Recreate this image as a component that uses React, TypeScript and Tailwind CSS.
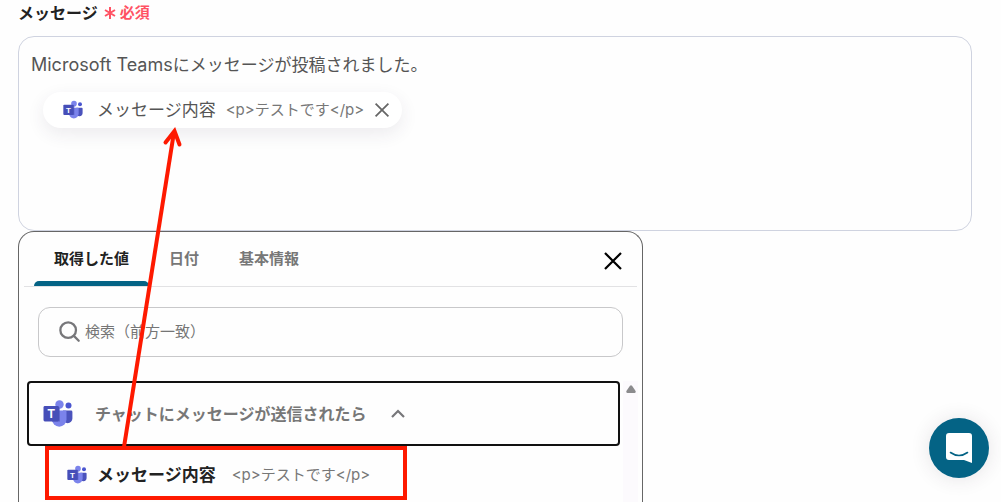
import React, { useState } from 'react';

const TABS = ['取得した値', '日付', '基本情報'];

const TeamsIcon: React.FC<{ className?: string }> = ({ className }) => (
  <svg viewBox="0 0 30 28" className={className} aria-hidden="true">
    <circle cx="25.5" cy="5.5" r="3" fill="#4a55cf" />
    <path d="M20 10.5h8a1.4 1.4 0 0 1 1.4 1.4v6.6a4.6 4.6 0 0 1-9.4 0z" fill="#4b53bc" />
    <circle cx="16.5" cy="4.5" r="4.2" fill="#7b83eb" />
    <path d="M9 10.5h13.2a1.3 1.3 0 0 1 1.3 1.3v7.6a7 7 0 0 1-14.500 0z" fill="#7b83eb" />
    <path d="M9 7h6.5A1.5 1.5 0 0 1 17 8.500v13H9z" fill="#4a50b5" opacity="0.6" />
    <rect x="0.500" y="6" width="15.500" height="15.500" rx="1.400" fill="#464eb8" />
    <text x="8.200" y="18" textAnchor="middle" fontSize="12" fontWeight="700" fill="#fff" fontFamily="Liberation Sans, sans-serif">T</text>
  </svg>
);

const CloseIcon: React.FC<{ className?: string }> = ({ className }) => (
  <svg viewBox="0 0 20 20" fill="none" stroke="currentColor" strokeWidth="2.200" className={className} aria-hidden="true">
    <path d="M2 2l16 16M18 2L2 18" />
  </svg>
);

export default function App() {
  const [tab, setTab] = useState(0);
  const [query, setQuery] = useState('');
  const [open, setOpen] = useState(true);
  const [hasValue, setHasValue] = useState(true);

  return (
    <div className="relative flex h-screen flex-col overflow-hidden bg-[#fefefe] pl-[18px] pr-[29px] font-['Inter','Noto_Sans_CJK_JP',sans-serif] text-[#555]">
      {/* Field label */}
      <div className="flex h-9 shrink-0 items-start gap-[6px]">
        <span id="message-label" className="text-base leading-[26px] font-bold text-[#222]">メッセージ</span>
        <span className="flex items-center gap-1 text-[15px] leading-[26px] font-bold text-[#ff5263]">
          <svg viewBox="0 0 12 12" className="size-3" stroke="currentColor" strokeWidth="2" aria-hidden="true">
            <path d="M6 0v12M1 3l10 6M11 3L1 9" />
          </svg>
          必須
        </span>
      </div>

      {/* Message editor */}
      <div
        role="textbox"
        aria-multiline="true"
        aria-labelledby="message-label"
        className="h-[195px] shrink-0 rounded-2xl border border-[#cfd3e0] px-3 py-4"
      >
        <p className="text-[17px] leading-6"><span className="text-lg leading-6">Microsoft Teams</span>にメッセージが投稿されました。</p>
        {hasValue && (
          <div className="mt-[15px] ml-3 inline-flex h-9 items-center rounded-full bg-white pr-3 pl-5 shadow-[0_6px_18px_rgba(60,40,80,0.09)]">
            <TeamsIcon className="mr-[14px] h-5 w-5" />
            <span className="text-[17px] leading-6">メッセージ内容</span>
            <span className="ml-[10px] text-[15px] leading-6 text-[#777]">&lt;p&gt;テストです&lt;/p&gt;</span>
            <button type="button" aria-label="削除" onClick={() => setHasValue(false)} className="ml-[10px] text-[#666]">
              <CloseIcon className="size-4" />
            </button>
          </div>
        )}
      </div>

      {/* Value picker */}
      <section className="flex min-h-0 w-full max-w-[625px] flex-1 flex-col rounded-t-2xl border border-b-0 border-[#666] bg-[#fefefe]">
        <header className="mx-[5px] flex h-[55px] shrink-0 items-stretch justify-between border-b border-[#e2e2e4] pr-[14px] pl-[10px]">
          <div role="tablist" className="flex">
            {TABS.map((name, i) => (
              <button
                key={name}
                type="button"
                role="tab"
                aria-selected={tab === i}
                onClick={() => setTab(i)}
                className={`relative px-5 text-[15px] leading-[22px] font-bold ${tab === i ? 'text-[#222]' : 'text-[#777]'}`}
              >
                {name}
                {tab === i && <span className="absolute inset-x-0 bottom-0 h-[5px] rounded-t-md bg-[#046385]" />}
              </button>
            ))}
          </div>
          <button type="button" aria-label="閉じる" className="pt-1 text-black">
            <CloseIcon className="size-5" />
          </button>
        </header>

        <label className="mx-[19px] mt-5 flex h-[50px] shrink-0 items-center gap-1 rounded-xl border border-[#c8c8ca] px-5">
          <svg viewBox="0 0 24 24" className="size-[22px] shrink-0" fill="none" stroke="#77777a" strokeWidth="2.500" strokeLinecap="round" aria-hidden="true">
            <circle cx="10" cy="10" r="8.500" />
            <path d="M16.500 16.500l5 5" />
          </svg>
          <input
            type="text"
            value={query}
            onChange={(e) => setQuery(e.target.value)}
            aria-label="検索"
            placeholder="検索（前方一致）"
            className="min-w-0 flex-1 bg-transparent text-[15px] leading-6 outline-none placeholder:text-[#757575]"
          />
        </label>

        <div className="mt-6 flex min-h-0 flex-1 pl-2">
          <div className="min-w-0 flex-1">
            <button
              type="button"
              aria-expanded={open}
              onClick={() => setOpen(!open)}
              className="flex h-[65px] w-full items-center rounded-[4px] border-2 border-[#111] px-[14px] text-base leading-6 font-bold text-[#777]"
            >
              <TeamsIcon className="mr-[22px] h-7 w-[30px]" />
              チャットにメッセージが送信されたら
              <svg viewBox="0 0 14 9" className="ml-6 h-[9px] w-[14px]" fill="none" stroke="#77777a" strokeWidth="2.200" aria-hidden="true">
                <path d="M1 8l6-6 6 6" />
              </svg>
            </button>
            {open && (
              <button type="button" className="ml-[18px] flex h-[54px] w-[362px] items-center border-4 border-[#fe1900] pt-1 pl-[18px] text-left">
                <TeamsIcon className="mr-[10px] h-5 w-5" />
                <span className="text-[17px] leading-6 font-bold text-[#222]">メッセージ内容</span>
                <span className="ml-4 text-[15px] leading-6 text-[#777]">&lt;p&gt;テストです&lt;/p&gt;</span>
              </button>
            )}
          </div>
          {/* Scrollbar track */}
          <div className="mr-1 ml-[3px] flex w-[15px] justify-center bg-[#fcfafd] pt-1">
            <svg viewBox="0 0 10 8" className="h-2 w-[10px]" fill="#8b8b8d" aria-hidden="true">
              <path d="M4 .8Q5-.4 6 .8L9.600 6Q10 8 8.500 8H1.500Q0 8 .4 6z" />
            </svg>
          </div>
        </div>
      </section>

      {/* Arrow from the picked value to its chip */}
      <svg viewBox="0 0 70 330" className="pointer-events-none absolute top-[120px] left-[120px] h-[330px] w-[70px]" fill="none" stroke="#fe1900" strokeWidth="4" aria-hidden="true">
        <path d="M4 327L54 12" />
        <path d="M45.500 22.500L54.500 11L59.500 24.500" strokeLinecap="round" strokeLinejoin="miter" />
      </svg>

      {/* Chat launcher */}
      <button
        type="button"
        aria-label="チャットを開く"
        className="absolute right-3 bottom-6 flex size-[60px] items-center justify-center rounded-full bg-[#046385] shadow-[0_1px_20px_rgba(60,40,60,0.12)]"
      >
        <svg viewBox="0 0 28 32" className="h-8 w-7" aria-hidden="true">
          <path d="M4 1h20a3 3 0 0 1 3 3v27l-8-3H4a3 3 0 0 1-3-3V4a3 3 0 0 1 3-3z" fill="#fff" />
          <path d="M5.500 20.500q8.500 6 17 0" fill="none" stroke="#046385" strokeWidth="1.600" strokeLinecap="round" />
        </svg>
      </button>
    </div>
  );
}
